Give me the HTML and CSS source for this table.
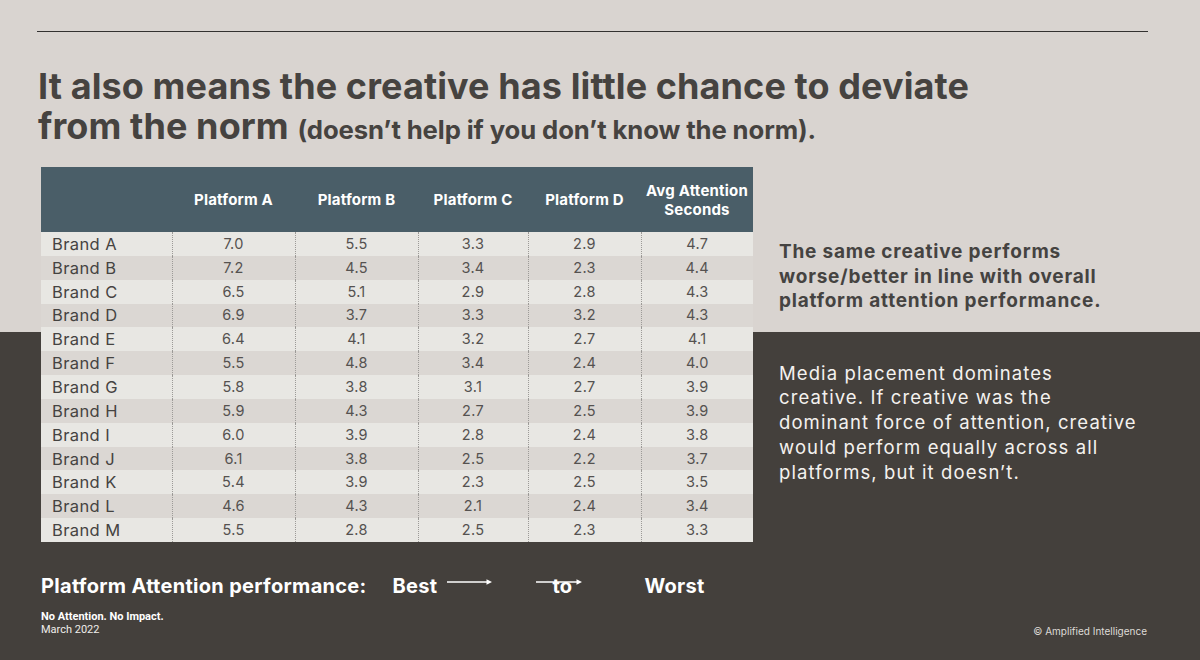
FILE: index.html
```html
<!DOCTYPE html>
<html lang="en">
<head>
<meta charset="utf-8">
<title>Platform attention</title>
<link rel="stylesheet" href="styles.css">
</head>
<body>
<div class="slide">
  <div class="rule"></div>
  <h1 class="title">It also means the creative has little chance to deviate<br>from the norm <span class="title-sub">(doesn’t help if you don’t know the norm).</span></h1>

  <div class="content">
    <table class="data">
      <colgroup>
        <col class="c-label"><col class="c-a"><col class="c-b"><col class="c-c"><col class="c-d"><col class="c-avg">
      </colgroup>
      <thead>
        <tr><th></th><th>Platform A</th><th>Platform B</th><th>Platform C</th><th>Platform D</th><th>Avg Attention<br>Seconds</th></tr>
      </thead>
      <tbody>
        <tr><td>Brand A</td><td>7.0</td><td>5.5</td><td>3.3</td><td>2.9</td><td>4.7</td></tr>
        <tr><td>Brand B</td><td>7.2</td><td>4.5</td><td>3.4</td><td>2.3</td><td>4.4</td></tr>
        <tr><td>Brand C</td><td>6.5</td><td>5.1</td><td>2.9</td><td>2.8</td><td>4.3</td></tr>
        <tr><td>Brand D</td><td>6.9</td><td>3.7</td><td>3.3</td><td>3.2</td><td>4.3</td></tr>
        <tr><td>Brand E</td><td>6.4</td><td>4.1</td><td>3.2</td><td>2.7</td><td>4.1</td></tr>
        <tr><td>Brand F</td><td>5.5</td><td>4.8</td><td>3.4</td><td>2.4</td><td>4.0</td></tr>
        <tr><td>Brand G</td><td>5.8</td><td>3.8</td><td>3.1</td><td>2.7</td><td>3.9</td></tr>
        <tr><td>Brand H</td><td>5.9</td><td>4.3</td><td>2.7</td><td>2.5</td><td>3.9</td></tr>
        <tr><td>Brand I</td><td>6.0</td><td>3.9</td><td>2.8</td><td>2.4</td><td>3.8</td></tr>
        <tr><td>Brand J</td><td>6.1</td><td>3.8</td><td>2.5</td><td>2.2</td><td>3.7</td></tr>
        <tr><td>Brand K</td><td>5.4</td><td>3.9</td><td>2.3</td><td>2.5</td><td>3.5</td></tr>
        <tr><td>Brand L</td><td>4.6</td><td>4.3</td><td>2.1</td><td>2.4</td><td>3.4</td></tr>
        <tr><td>Brand M</td><td>5.5</td><td>2.8</td><td>2.5</td><td>2.3</td><td>3.3</td></tr>
      </tbody>
    </table>

    <div class="notes">
      <p class="note-strong">The same creative performs<br>worse/better in line with overall<br>platform attention performance.</p>
      <p class="note-light">Media placement dominates<br>creative. If creative was the<br>dominant force of attention, creative<br>would perform equally across all<br>platforms, but it doesn’t.</p>
    </div>
  </div>

  <div class="scale">
    <span class="scale-label">Platform Attention performance:</span>
    <span class="scale-best">Best</span>
    <svg class="arrow" width="45" height="6" viewBox="0 0 45 6"><line x1="0" y1="3" x2="40" y2="3" stroke="#fff" stroke-width="1.4"/><path d="M39.5 0.2 L45 3 L39.5 5.8 Z" fill="#fff"/></svg>
    <span class="scale-to">to<svg class="arrow-over" width="46" height="6" viewBox="0 0 46 6"><line x1="0" y1="3" x2="41" y2="3" stroke="#fff" stroke-width="1.4"/><path d="M40.5 0.2 L46 3 L40.5 5.8 Z" fill="#fff"/></svg></span>
    <span class="scale-worst">Worst</span>
  </div>

  <div class="footer">
    <div class="foot-left">
      <div class="foot-strong">No Attention. No Impact.</div>
      <div class="foot-date">March 2022</div>
    </div>
    <div class="foot-right">© Amplified Intelligence</div>
  </div>
</div>
</body>
</html>
```

FILE: styles.css
```css
* { box-sizing: border-box; }
html, body { margin: 0; padding: 0; }
body {
  width: 1200px;
  height: 660px;
  overflow: hidden;
  font-family: "Inter", "Noto Sans", sans-serif;
  background: linear-gradient(to bottom, #d9d4d0 0, #d9d4d0 332px, #44403c 332px, #44403c 100%);
}
.slide {
  padding: 31px 52px 0 37px;
}
.rule {
  height: 0;
  border-top: 1.5px solid #333130;
  width: 1111px;
}
.title {
  margin: 34px 0 0 1px;
  font-size: 36px;
  line-height: 40px;
  font-weight: 700;
  letter-spacing: 0.1px;
  color: #464340;
}
.title-sub {
  font-size: 25.7px;
  letter-spacing: -0.1px;
}
.content {
  display: flex;
  align-items: flex-start;
  margin-top: 17px;
  padding-left: 4px;
}
.data {
  border-collapse: collapse;
  table-layout: fixed;
  width: 712px;
}
.c-label { width: 131px; }
.c-a { width: 123px; }
.c-b { width: 123px; }
.c-c { width: 110px; }
.c-d { width: 113px; }
.c-avg { width: 112px; }
.data thead th {
  background: #4a5e68;
  color: #ffffff;
  height: 65px;
  padding: 0;
  font-size: 15px;
  line-height: 19px;
  font-weight: 700;
  letter-spacing: 0.2px;
  text-align: center;
  vertical-align: middle;
}
.data tbody td {
  height: 23.85px;
  padding: 0;
  font-size: 14.5px;
  letter-spacing: 0.3px;
  color: #555250;
  text-align: center;
  line-height: 20px;
  border-left: 1px dotted #9c9a97;
}
.data tbody td:first-child {
  border-left: none;
  text-align: left;
  padding-left: 11px;
  font-size: 16.5px;
  letter-spacing: 0.4px;
  color: #454341;
}
.data tbody tr:nth-child(odd) td { background: #e8e7e3; }
.data tbody tr:nth-child(even) td { background: #dbd7d3; }

.notes {
  margin-left: 26px;
  white-space: nowrap;
}
.note-strong {
  margin: 73px 0 0;
  font-size: 19px;
  line-height: 24.5px;
  font-weight: 700;
  letter-spacing: 0.8px;
  color: #454341;
}
.note-light {
  margin: 47px 0 0;
  font-size: 18.5px;
  line-height: 24.8px;
  font-weight: 400;
  letter-spacing: 1.1px;
  color: #f4f2ef;
}
.scale {
  display: flex;
  align-items: baseline;
  margin-top: 32px;
  padding-left: 4px;
  color: #ffffff;
  font-weight: 700;
  font-size: 20px;
  letter-spacing: 0.3px;
  line-height: 24px;
}
.scale-best { margin-left: 26px; }
.arrow { margin-left: 10px; align-self: flex-start; margin-top: 5px; }
.scale-to { position: relative; margin-left: 60px; }
.arrow-over { position: absolute; left: -16px; top: 5px; }
.scale-worst { margin-left: 72px; }

.footer {
  display: flex;
  justify-content: space-between;
  align-items: flex-end;
  margin-top: 12px;
  padding-left: 4px;
  color: #ffffff;
  font-family: "Roboto", "Inter", sans-serif;
}
.foot-strong { font-size: 11px; font-weight: 700; line-height: 13px; }
.foot-date { font-size: 11px; font-weight: 400; line-height: 13px; color: #efedea; }
.foot-right {
  font-family: "Inter", sans-serif;
  font-size: 10px;
  color: #dedbd7;
  margin-right: 1px;
  margin-bottom: -1px;
}
```
